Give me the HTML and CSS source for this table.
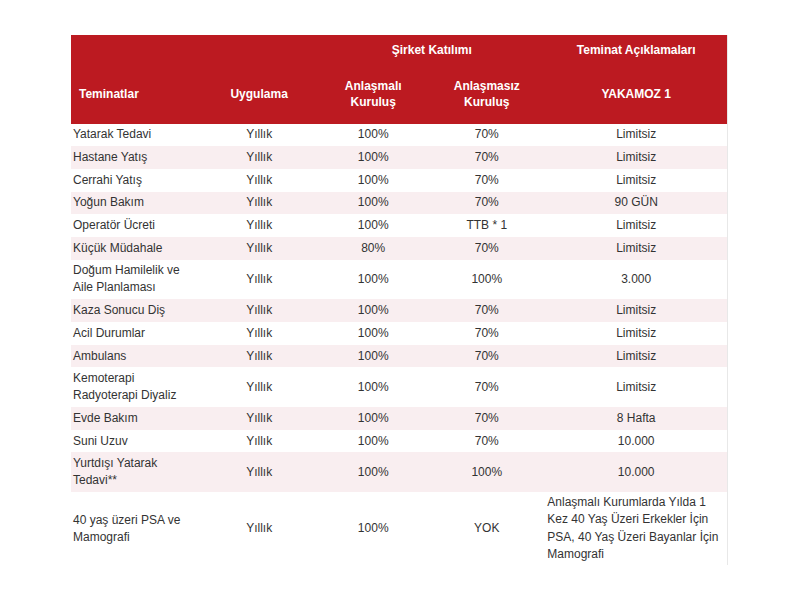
FILE: index.html
```html
<!DOCTYPE html>
<html lang="tr">
<head>
<meta charset="utf-8">
<title>Teminatlar</title>
<link rel="stylesheet" href="styles.css">
</head>
<body>
<div class="page">
<table class="plan">
  <colgroup>
    <col class="c1"><col class="c2"><col class="c3"><col class="c4"><col class="c5">
  </colgroup>
  <thead>
    <tr class="h1">
      <th></th><th></th>
      <th colspan="2" class="ctr">Şirket Katılımı</th>
      <th class="ctr">Teminat Açıklamaları</th>
    </tr>
    <tr class="h2">
      <th class="lft">Teminatlar</th>
      <th class="ctr">Uygulama</th>
      <th class="ctr">Anlaşmalı<br>Kuruluş</th>
      <th class="ctr">Anlaşmasız<br>Kuruluş</th>
      <th class="ctr">YAKAMOZ 1</th>
    </tr>
  </thead>
  <tbody>
    <tr><td>Yatarak Tedavi</td><td>Yıllık</td><td>100%</td><td>70%</td><td>Limitsiz</td></tr>
    <tr><td>Hastane Yatış</td><td>Yıllık</td><td>100%</td><td>70%</td><td>Limitsiz</td></tr>
    <tr><td>Cerrahi Yatış</td><td>Yıllık</td><td>100%</td><td>70%</td><td>Limitsiz</td></tr>
    <tr><td>Yoğun Bakım</td><td>Yıllık</td><td>100%</td><td>70%</td><td>90 GÜN</td></tr>
    <tr><td>Operatör Ücreti</td><td>Yıllık</td><td>100%</td><td>TTB * 1</td><td>Limitsiz</td></tr>
    <tr><td>Küçük Müdahale</td><td>Yıllık</td><td>80%</td><td>70%</td><td>Limitsiz</td></tr>
    <tr><td>Doğum Hamilelik ve<br>Aile Planlaması</td><td>Yıllık</td><td>100%</td><td>100%</td><td>3.000</td></tr>
    <tr><td>Kaza Sonucu Diş</td><td>Yıllık</td><td>100%</td><td>70%</td><td>Limitsiz</td></tr>
    <tr><td>Acil Durumlar</td><td>Yıllık</td><td>100%</td><td>70%</td><td>Limitsiz</td></tr>
    <tr><td>Ambulans</td><td>Yıllık</td><td>100%</td><td>70%</td><td>Limitsiz</td></tr>
    <tr><td>Kemoterapi<br>Radyoterapi Diyaliz</td><td>Yıllık</td><td>100%</td><td>70%</td><td>Limitsiz</td></tr>
    <tr><td>Evde Bakım</td><td>Yıllık</td><td>100%</td><td>70%</td><td>8 Hafta</td></tr>
    <tr><td>Suni Uzuv</td><td>Yıllık</td><td>100%</td><td>70%</td><td>10.000</td></tr>
    <tr><td>Yurtdışı Yatarak<br>Tedavi**</td><td>Yıllık</td><td>100%</td><td>100%</td><td>10.000</td></tr>
    <tr><td>40 yaş üzeri PSA ve<br>Mamografi</td><td>Yıllık</td><td>100%</td><td>YOK</td><td class="desc">Anlaşmalı Kurumlarda Yılda 1 Kez 40 Yaş Üzeri Erkekler İçin PSA, 40 Yaş Üzeri Bayanlar İçin Mamografi</td></tr>
  </tbody>
</table>
</div>
</body>
</html>
```

FILE: styles.css
```css
html, body {
  margin: 0;
  padding: 0;
  background: #ffffff;
}
.page {
  padding: 35px 0 0 71px;
}
.plan {
  border-collapse: collapse;
  table-layout: fixed;
  width: 657px;
  font-family: "Liberation Sans", Arial, sans-serif;
  font-size: 12px;
  color: #333333;
  border-right: 1px solid #e8e8e8;
}
.c1 { width: 129px; }
.c2 { width: 118px; }
.c3 { width: 110px; }
.c4 { width: 117px; }
.c5 { width: 182px; }
.plan thead th {
  background: #bc1a21;
  color: #ffffff;
  font-weight: bold;
  line-height: 16px;
  padding: 0 2px;
}
.plan .h1 th { height: 30px; }
.plan .h2 th { height: 58.5px; }
.plan th.lft { text-align: left; padding-left: 8px; }
.plan th.ctr { text-align: center; }
.plan tbody td {
  line-height: 17px;
  padding: 2.85px 2px;
  text-align: center;
  vertical-align: middle;
}
.plan tbody td:first-child { text-align: left; }
.plan tbody tr:nth-child(even) td { background: #f9eef0; }
.plan tbody td.desc { text-align: left; line-height: 17.3px; padding-top: 2px; padding-bottom: 2px; }
```
